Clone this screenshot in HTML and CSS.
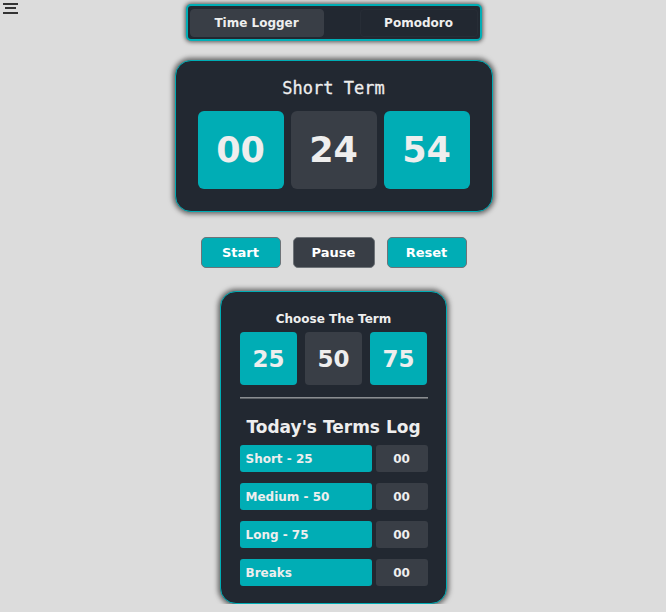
FILE: index.html
```html
<!DOCTYPE html>
<html lang="en">
<head>
<meta charset="utf-8">
<title>Time Logger</title>
<link rel="stylesheet" href="styles.css">
</head>
<body>
<div class="page">
  <header class="top">
    <div class="menu">
      <svg width="16" height="12" viewBox="0 0 16 12" aria-hidden="true">
        <rect x="0" y="0" width="15" height="2" fill="#333"/>
        <rect x="2" y="4" width="11" height="2" fill="#333"/>
        <rect x="0" y="9" width="15" height="2" fill="#333"/>
      </svg>
    </div>
    <nav class="tabs">
      <button class="tab active">Time Logger</button>
      <button class="tab">Pomodoro</button>
    </nav>
    <div></div>
  </header>

  <section class="card timer">
    <h2 class="timer-title">Short Term</h2>
    <div class="digits">
      <div class="digit teal">00</div>
      <div class="digit gray">24</div>
      <div class="digit teal">54</div>
    </div>
  </section>

  <div class="controls">
    <button class="ctrl teal">Start</button>
    <button class="ctrl gray pause">Pause</button>
    <button class="ctrl teal">Reset</button>
  </div>

  <section class="card terms">
    <h3 class="choose-title">Choose The Term</h3>
    <div class="choices">
      <div class="choice teal">25</div>
      <div class="choice gray">50</div>
      <div class="choice teal">75</div>
    </div>
    <hr class="sep">
    <h2 class="log-title">Today's Terms Log</h2>
    <div class="log">
      <div class="row"><span class="label">Short - 25</span><span class="count">00</span></div>
      <div class="row"><span class="label">Medium - 50</span><span class="count">00</span></div>
      <div class="row"><span class="label">Long - 75</span><span class="count">00</span></div>
      <div class="row"><span class="label">Breaks</span><span class="count">00</span></div>
    </div>
  </section>
</div>
</body>
</html>
```

FILE: styles.css
```css
* { box-sizing: border-box; }

html, body {
  margin: 0;
  padding: 0;
  background: #dcdcdc;
  font-family: "DejaVu Sans", sans-serif;
  color: #eeeeee;
}

.page {
  display: flex;
  flex-direction: column;
  align-items: center;
  padding-left: 1px;
}

.top {
  width: 100%;
  display: grid;
  grid-template-columns: 1fr auto 1fr;
  align-items: start;
}

.menu {
  padding: 3px 0 0 2px;
  line-height: 0;
}

.tabs {
  margin-top: 4px;
  width: 296px;
  height: 37px;
  display: flex;
  justify-content: space-between;
  align-items: flex-end;
  padding: 0 2px 2px;
  background: #222831;
  border: 2px solid #00adb5;
  border-radius: 5px;
  box-shadow: 0 0 4px 1px rgba(0,0,0,0.6);
}

.tab {
  height: 28px;
  border: 1px solid #272d36;
  border-radius: 4px;
  background: #222831;
  color: #eeeeee;
  font-family: "DejaVu Sans", sans-serif;
  font-weight: bold;
  font-size: 12px;
  padding: 0;
  width: 118px;
}

.tab.active {
  width: 134px;
  background: #393e46;
  border-color: #393e46;
}

.card {
  background: #222831;
  border: 1px solid #00adb5;
  border-radius: 16px;
  box-shadow: 0 0 5px 2px rgba(0,0,0,0.55);
}

.timer {
  margin-top: 19px;
  width: 318px;
  height: 152px;
  padding: 17px 22px 0;
  display: flex;
  flex-direction: column;
  align-items: center;
}

.timer-title {
  margin: 0 0 13px;
  font-family: "DejaVu Sans Mono", monospace;
  font-weight: normal;
  font-size: 17px;
  line-height: 20px;
  color: #eeeeee;
  -webkit-text-stroke: 0.3px #eeeeee;
}

.digits {
  display: flex;
  gap: 7px;
}

.digit {
  width: 86px;
  height: 78px;
  border-radius: 6px;
  display: flex;
  align-items: center;
  justify-content: center;
  font-size: 35px;
  font-weight: bold;
  color: #eeeeee;
}

.teal { background: #00adb5; }
.gray { background: #393e46; }

.controls {
  margin-top: 25px;
  display: flex;
  gap: 12px;
}

.ctrl {
  width: 80px;
  height: 31px;
  border: 1px solid #6e7378;
  border-radius: 5px;
  color: #ffffff;
  font-family: "DejaVu Sans", sans-serif;
  font-weight: bold;
  font-size: 13px;
  padding: 0;
}

.ctrl.pause { width: 82px; }

.terms {
  margin-top: 23px;
  width: 227px;
  padding: 20px 18px 17px;
  display: flex;
  flex-direction: column;
  align-items: center;
}

.choose-title {
  margin: 0 0 5px;
  font-size: 12px;
  line-height: 15px;
  font-weight: bold;
}

.choices {
  display: flex;
  gap: 8px;
}

.choice {
  width: 57px;
  height: 53px;
  border-radius: 4px;
  display: flex;
  align-items: center;
  justify-content: center;
  font-size: 23px;
  font-weight: bold;
}

.sep {
  width: 188px;
  margin: 12px 0 0;
  height: 0;
  border: 0;
  border-top: 1px solid #8a8d91;
  border-bottom: 1px solid #5d6166;
}

.log-title {
  margin: 18px 0 7px;
  font-size: 17px;
  line-height: 21px;
  font-weight: bold;
}

.log {
  display: flex;
  flex-direction: column;
  gap: 11px;
}

.row {
  display: flex;
  gap: 4px;
}

.label {
  width: 132px;
  height: 27px;
  background: #00adb5;
  border-radius: 3px;
  padding-left: 6px;
  display: flex;
  align-items: center;
  font-size: 12px;
  font-weight: bold;
}

.count {
  width: 52px;
  height: 27px;
  background: #393e46;
  border-radius: 3px;
  display: flex;
  align-items: center;
  justify-content: center;
  font-size: 12px;
  font-weight: bold;
}
```
